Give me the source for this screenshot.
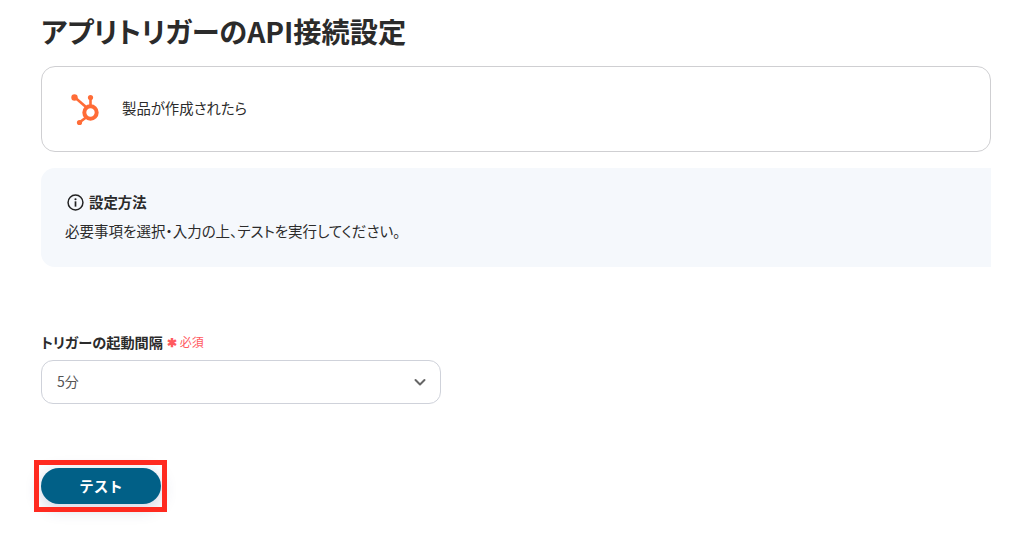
<script>
    const intervals = ['5分', '10分', '15分', '30分', '60分'];
</script>

<main>
    <h1>アプリトリガーのAPI接続設定</h1>

    <div class="app-card">
        <svg class="logo" viewBox="0 0 34 34" width="34" height="34" aria-hidden="true">
            <g fill="none" stroke="#ff6c37" stroke-linecap="round">
                <circle cx="21.5" cy="20.5" r="6.2" stroke-width="4" />
                <path d="M6 5.5 L17 15" stroke-width="2.6" />
                <path d="M21.5 13 V6" stroke-width="2.6" />
                <path d="M17 25.5 L11 30" stroke-width="2.6" />
            </g>
            <g fill="#ff6c37">
                <circle cx="5.5" cy="5.5" r="3.2" />
                <circle cx="21.5" cy="5.5" r="2.6" />
                <circle cx="10.5" cy="30.5" r="2.6" />
            </g>
        </svg>
        <span>製品が作成されたら</span>
    </div>

    <section class="help">
        <h2>
            <svg viewBox="0 0 16 16" width="17" height="17" aria-hidden="true">
                <circle cx="8" cy="8" r="7" fill="none" stroke="#222" stroke-width="1.4" />
                <circle cx="8" cy="4.9" r="1" fill="#222" />
                <rect x="7.2" y="6.9" width="1.6" height="5" fill="#222" />
            </svg>
            設定方法
        </h2>
        <p>必要事項を選択・入力の上、テストを実行してください。</p>
    </section>

    <div class="field">
        <div class="label">
            トリガーの起動間隔
            <span class="required"><span class="star">✱</span> 必須</span>
        </div>
        <div class="select">
            <span>{intervals[0]}</span>
            <svg viewBox="0 0 14 14" width="14" height="14" aria-hidden="true">
                <path d="M2.5 5 L7 9.5 L11.5 5" fill="none" stroke="#666" stroke-width="2" stroke-linecap="round" stroke-linejoin="round" />
            </svg>
        </div>
    </div>

    <div class="actions">
        <button>テスト</button>
        <div class="highlight"></div>
    </div>
</main>

<style>
    :global(body) {
        background: #fff;
        font-family: "Noto Sans CJK JP", "Noto Sans", sans-serif;
        font-feature-settings: "palt";
        color: #2b2b2b;
    }

    main {
        width: 950px;
        height: 539px;
        margin-left: 41px;
    }

    h1 {
        margin: 11px 0 0;
        font-size: 28.2px;
        line-height: 40px;
        font-weight: 700;
        color: #2b2b2b;
    }

    .app-card {
        display: flex;
        align-items: center;
        gap: 19px;
        box-sizing: border-box;
        height: 86px;
        margin-top: 15px;
        padding: 0 0 3px 27px;
        border: 1px solid #cfcfd2;
        border-radius: 14px;
        font-size: 14.4px;
    }

    .logo {
        margin-top: 2px;
    }

    .help {
        box-sizing: border-box;
        height: 99px;
        margin-top: 16px;
        padding: 24px 24px 0;
        background: #f5f8fc;
        border-radius: 14px 0 0 14px;
    }

    h2 {
        display: flex;
        align-items: center;
        gap: 5px;
        margin: 0 0 0 2px;
        font-size: 14.4px;
        line-height: 20px;
        font-weight: 700;
    }

    .help p {
        margin: 9px 0 0;
        font-size: 14.5px;
        line-height: 20px;
    }

    .field {
        margin-top: 65px;
    }

    .label {
        display: flex;
        align-items: center;
        gap: 4px;
        font-size: 14.2px;
        line-height: 20px;
        font-weight: 700;
    }

    .required {
        font-size: 12px;
        font-weight: 400;
        color: #ff5a5f;
    }

    .star {
        font-size: 12px;
        font-weight: 700;
    }

    .select {
        display: flex;
        align-items: center;
        justify-content: space-between;
        box-sizing: border-box;
        width: 400px;
        height: 44px;
        margin-top: 8px;
        padding: 0 13px 2px 15px;
        border: 1px solid #cfd2da;
        border-radius: 12px;
        font-size: 14px;
        color: #555;
    }

    .select svg {
        margin-top: 2px;
    }

    .actions {
        position: relative;
        width: 120px;
        margin-top: 64px;
    }

    button {
        display: block;
        width: 120px;
        height: 36px;
        padding: 0 0 2px;
        border: 0;
        border-radius: 18px;
        background: #016087;
        box-shadow: 0 4px 16px rgba(60, 70, 140, .25);
        font: 700 14.5px "Noto Sans CJK JP", sans-serif;
        color: #fff;
    }

    .highlight {
        position: absolute;
        left: -7px;
        top: -8px;
        width: 133px;
        height: 52px;
        box-sizing: border-box;
        border: 5px solid #ff2a20;
    }
</style>
